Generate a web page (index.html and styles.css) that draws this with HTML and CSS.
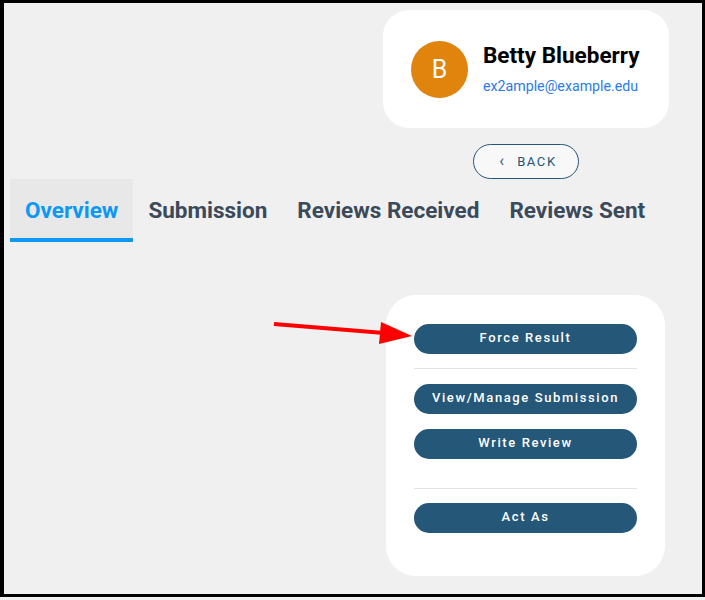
FILE: index.html
```html
<!DOCTYPE html>
<html>
<head>
<meta charset="utf-8">
<link rel="stylesheet" href="styles.css">
</head>
<body>
<div class="frame">
  <div class="top">
    <div class="profile">
      <div class="avatar">B</div>
      <div class="who">
        <div class="name">Betty Blueberry</div>
        <div class="email">ex2ample@example.edu</div>
      </div>
    </div>
    <button class="back"><span class="chev">&lsaquo;</span>BACK</button>
  </div>
  <div class="tabs">
    <div class="tab active">Overview</div>
    <div class="tab">Submission</div>
    <div class="tab">Reviews Received</div>
    <div class="tab">Reviews Sent</div>
  </div>
  <div class="actions">
    <button class="act">Force Result</button>
    <hr class="sep first">
    <button class="act">View/Manage Submission</button>
    <button class="act">Write Review</button>
    <hr class="sep second">
    <button class="act">Act As</button>
  </div>
  <svg class="arrow" width="705" height="600" viewBox="0 0 705 600">
    <line x1="274" y1="324" x2="384" y2="333" stroke="#ff0000" stroke-width="4"/>
    <polygon points="381,322 412,336 379,344" fill="#ff0000"/>
  </svg>
</div>
</body>
</html>
```
FILE: styles.css
```css
* { box-sizing: border-box; }
html, body { margin: 0; padding: 0; background: #f0f0f0; }
body { font-family: Roboto, "Liberation Sans", sans-serif; }
.frame {
  position: relative;
  height: 597px;
  border: 3px solid #000;
  border-left-width: 4px;
  padding-top: 7px;
}
.top {
  width: 300px;
  margin-left: 372px;
  display: flex;
  flex-direction: column;
  align-items: center;
}
.profile {
  width: 286px;
  height: 118px;
  background: #fff;
  border-radius: 26px;
  display: flex;
  align-items: center;
  padding-left: 28px;
  gap: 15px;
}
.avatar {
  width: 57px;
  height: 57px;
  border-radius: 50%;
  background: #e0840d;
  color: #fff;
  font-size: 25px;
  display: flex;
  align-items: center;
  justify-content: center;
  margin-top: 1px;
}
.who { display: flex; flex-direction: column; }
.name { font-size: 22.5px; font-weight: 700; color: #000; line-height: 26px; margin-top: -3px; }
.email { font-size: 14.2px; color: #2b7be6; margin-top: 10px; }
.back {
  margin-top: 16px;
  height: 35px;
  width: 106px;
  border: 1px solid #235577;
  border-radius: 18px;
  background: #f8f8f8;
  color: #235577;
  font-family: Roboto, "Liberation Sans", sans-serif;
  font-size: 13px;
  letter-spacing: 1.6px;
  display: flex;
  align-items: center;
  justify-content: center;
  padding: 0 0 0 4px;
}
.chev { font-size: 16px; margin-right: 13px; letter-spacing: 0; margin-top: -2px; }
.tabs {
  display: flex;
  margin-left: 6px;
  height: 63px;
}
.tab {
  padding: 0 15px;
  font-size: 22.5px;
  font-weight: 700;
  color: #3b4a5a;
  display: flex;
  align-items: center;
  border-bottom: 4px solid transparent;
  padding-top: 3px;
}
.tab.active {
  color: #0c98f3;
  background: #e8e8e8;
  border-bottom: 4px solid #0c98f3;
}
.actions {
  width: 279px;
  margin: 53px 0 0 382px;
  background: #fff;
  border-radius: 30px;
  padding: 29px 28px 43px;
  display: flex;
  flex-direction: column;
}
.act {
  height: 30px;
  border: none;
  border-radius: 15px;
  background: #245778;
  color: #fff;
  font-family: Roboto, "Liberation Sans", sans-serif;
  font-size: 13px;
  font-weight: 500;
  letter-spacing: 1.6px;
  padding: 0 0 3px 0;
}
.act + .act { margin-top: 15px; }
.sep { border: none; border-top: 1px solid #e2e2e2; margin: 0; width: 100%; }
.sep.first { margin: 14px 0 15px; }
.sep.second { margin: 29px 0 14px; }
.arrow { position: absolute; left: -4px; top: -3px; pointer-events: none; }
```
